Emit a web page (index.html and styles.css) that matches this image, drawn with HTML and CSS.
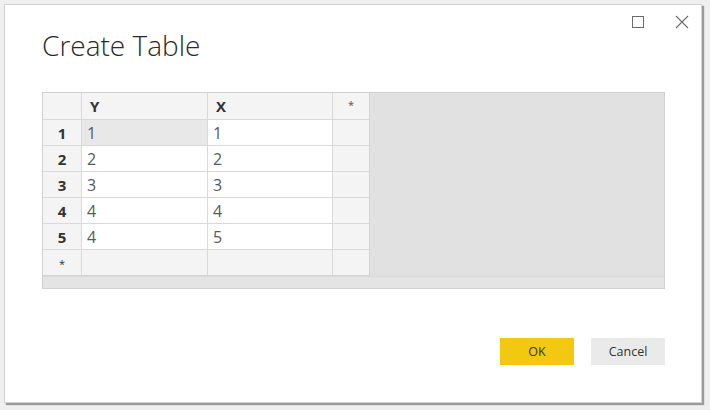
FILE: index.html
```html
<!DOCTYPE html>
<html>
<head>
<meta charset="utf-8">
<link rel="stylesheet" href="styles.css">
</head>
<body>
<div class="dialog">
  <div class="win-controls">
    <svg class="ctl" width="14" height="14" viewBox="0 0 14 14"><rect x="1.5" y="1.5" width="11" height="11" fill="none" stroke="#6b6b6b" stroke-width="1"/></svg>
    <svg class="ctl close" width="14" height="14" viewBox="0 0 14 14"><path d="M1 1 L13 13 M13 1 L1 13" stroke="#6b6b6b" stroke-width="1.1" fill="none"/></svg>
  </div>
  <h1 class="title">Create Table</h1>
  <div class="table-wrap">
    <div class="table-top">
      <div class="grid">
        <div class="c hd"></div><div class="c hd col">Y</div><div class="c hd col">X</div><div class="c hd star">*</div>
        <div class="c rh">1</div><div class="c v sel">1</div><div class="c v">1</div><div class="c ex"></div>
        <div class="c rh">2</div><div class="c v">2</div><div class="c v">2</div><div class="c ex"></div>
        <div class="c rh">3</div><div class="c v">3</div><div class="c v">3</div><div class="c ex"></div>
        <div class="c rh">4</div><div class="c v">4</div><div class="c v">4</div><div class="c ex"></div>
        <div class="c rh">5</div><div class="c v">4</div><div class="c v">5</div><div class="c ex"></div>
        <div class="c rh star">*</div><div class="c ex"></div><div class="c ex"></div><div class="c ex"></div>
      </div>
    </div>
    <div class="hscroll"></div>
  </div>
  <div class="buttons">
    <button class="btn ok">OK</button>
    <button class="btn cancel">Cancel</button>
  </div>
</div>
</body>
</html>
```

FILE: styles.css
```css
html, body {
  margin: 0;
  padding: 0;
}
body {
  background: #efefef;
  width: 710px;
  height: 410px;
  padding: 4px 0 0 4px;
  box-sizing: border-box;
  font-family: "Open Sans", "Liberation Sans", sans-serif;
}
.dialog {
  position: relative;
  width: 698px;
  height: 399px;
  box-sizing: border-box;
  background: #ffffff;
  border: 1px solid #d2d2d2;
  box-shadow: 2px 2px 1px rgba(0,0,0,0.35);
  display: flex;
  flex-direction: column;
  padding: 0 36px 0 37px;
}
.win-controls {
  position: absolute;
  top: 10px;
  right: 12px;
  display: flex;
  gap: 30px;
}
.ctl { display: block; }
.title {
  margin: 23px 0 0 0;
  font-size: 28px;
  line-height: 34px;
  font-weight: 300;
  color: #2b2b2b;
  height: 34px;
}
.table-wrap {
  margin-top: 30px;
  width: 623px;
  height: 197px;
  box-sizing: border-box;
  border: 1px solid #d0d0d0;
  background: #e1e1e1;
  display: flex;
  flex-direction: column;
}
.table-top {
  flex: 1;
  display: flex;
}
.grid {
  display: grid;
  grid-template-columns: 38px 125px 124px 36px;
  grid-template-rows: 26px repeat(6, 25px);
  gap: 1px;
  background: #d9d9d9;
  border-right: 1px solid #d3d3d3;
  border-bottom: 1px solid #d3d3d3;
  align-self: flex-start;
}
.c {
  display: flex;
  align-items: center;
  font-size: 15px;
  color: #333;
  box-sizing: border-box;
}
.hd { background: #f4f4f4; }
.col {
  font-weight: 700;
  padding-left: 8px;
  color: #333;
}
.star {
  justify-content: center;
  font-size: 11px;
  color: #555;
  align-items: flex-start;
  padding-top: 4px;
}
.rh {
  background: #f4f4f4;
  justify-content: center;
  font-weight: 700;
  color: #333;
}
.rh.star { padding-top: 6px; font-weight: 400; }
.v {
  background: #ffffff;
  padding-left: 5px;
  font-size: 16px;
  color: #5a5a5a;
}
.v.sel { background: #e8e8e8; }
.ex { background: #f4f4f4; }
.hscroll {
  height: 11px;
  background: #e4e4e4;
  border-top: 1px solid #dadada;
}
.buttons {
  margin-top: 49px;
  display: flex;
  justify-content: flex-end;
  gap: 17px;
  width: 623px;
}
.btn {
  width: 74px;
  height: 27px;
  border: none;
  font-family: "Open Sans", "Liberation Sans", sans-serif;
  font-size: 12.5px;
  color: #333;
  padding: 0;
}
.ok { background: #f2c811; }
.cancel { background: #eaeaea; }
```
